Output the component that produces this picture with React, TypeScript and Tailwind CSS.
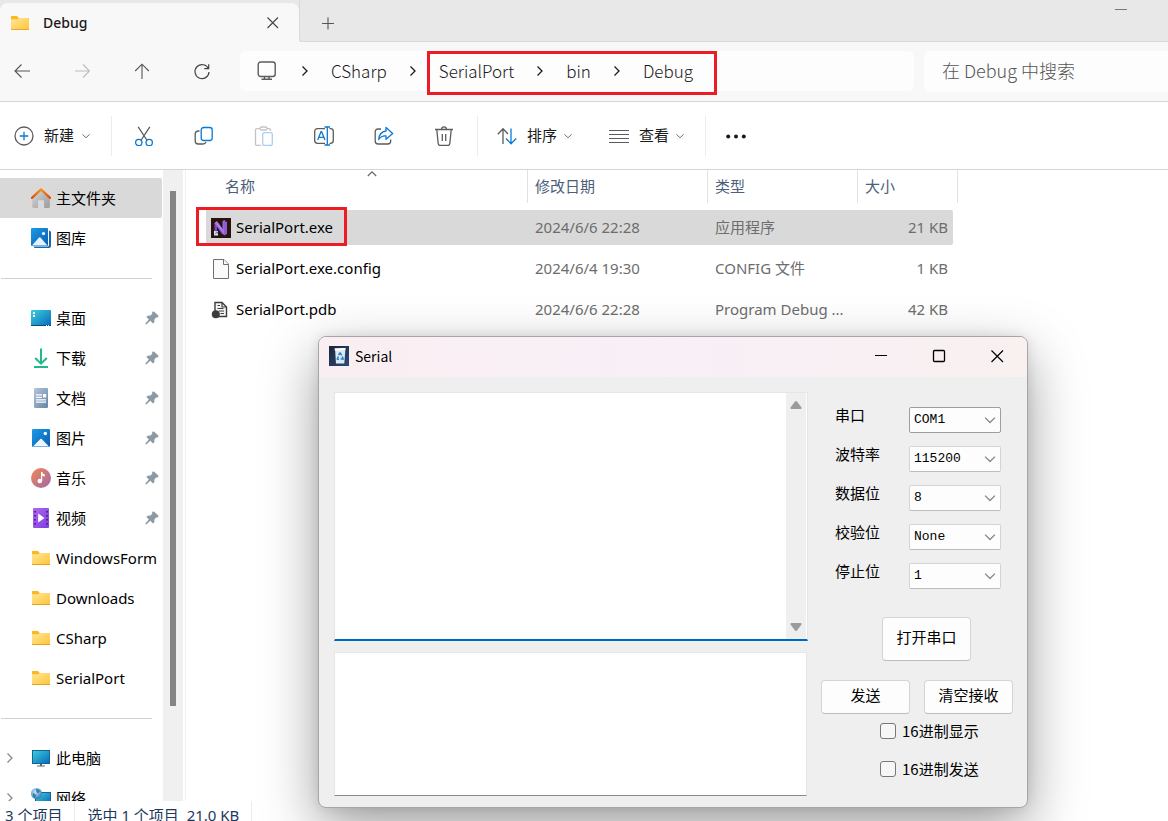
import type { ReactNode } from "react";

/* ---------- Icons ---------- */

function FolderIcon() {
  return (
    <svg viewBox="0 0 20 20" className="size-5 shrink-0" aria-hidden="true">
      <defs>
        <linearGradient id="folder" x1="0" y1="0" x2="1" y2="1">
          <stop offset="0" stopColor="#ffe69a" />
          <stop offset="1" stopColor="#ffc53a" />
        </linearGradient>
      </defs>
      <path d="M1 3.6Q1 3 1.6 3H7l1.8 2H18.400q.6 0 .6.600V10H1z" fill="#fcb81c" />
      <path d="M1 6.200H7L8.800 5H19V16.400H1z" fill="url(#folder)" />
      <path d="M1 16h18v.9H1z" fill="#e5a21c" />
    </svg>
  );
}

function HomeIcon() {
  return (
    <svg viewBox="0 0 20 20" className="size-5 shrink-0" aria-hidden="true">
      <defs>
        <linearGradient id="wall" x1="0" y1="0" x2="1" y2="1">
          <stop offset="0" stopColor="#d9d9d9" />
          <stop offset="1" stopColor="#9a9a9a" />
        </linearGradient>
        <linearGradient id="roof" x1="0" y1="0" x2="0" y2="1">
          <stop offset="0" stopColor="#f6921e" />
          <stop offset="1" stopColor="#dd4f12" />
        </linearGradient>
      </defs>
      <path d="M1.200 9.500 10 1.500l8.800 8V18.500q0 1.500-1.500 1.500H13V13.500q0-1.200-1.200-1.200H8.200Q7 12.300 7 13.500V20H2.700Q1.200 20 1.200 18.500z" fill="url(#wall)" />
      <path d="M.9 9.900 10 1.400l9.100 8.500" fill="none" stroke="url(#roof)" strokeWidth="2.300" strokeLinecap="round" strokeLinejoin="round" />
    </svg>
  );
}

function PictureIcon({ stacked = false }: { stacked?: boolean }) {
  return (
    <svg viewBox="0 0 20 20" className="size-5 shrink-0" aria-hidden="true">
      <defs>
        <linearGradient id="sky" x1="0" y1="0" x2="1" y2="1">
          <stop offset="0" stopColor="#1c9be8" />
          <stop offset="1" stopColor="#0a5cb0" />
        </linearGradient>
      </defs>
      {stacked ? (
        <>
          <path d="M18 2.500q2 .3 2 2V18q0 2-2 2H4.500q-1.700 0-2-1.500H16.500q1.500 0 1.500-1.500z" fill="#1566b5" />
          <rect x="0" y="0" width="17" height="18" rx="1" fill="url(#sky)" />
          <circle cx="12.500" cy="5.500" r="1.600" fill="#fff" />
          <path d="M1 17.500 8 9.500q.7-.7 1.400 0L16.500 17.500z" fill="#e6f3fd" />
        </>
      ) : (
        <>
          <rect x="1" y="1" width="18" height="18" rx="1.200" fill="url(#sky)" />
          <circle cx="14.300" cy="5.500" r="1.700" fill="#fff" />
          <path d="M2 18.500 9.300 11q.7-.7 1.400 0L18 18.500z" fill="#eef7fe" />
        </>
      )}
    </svg>
  );
}

function DesktopIcon() {
  return (
    <svg viewBox="0 0 20 20" className="size-5 shrink-0" aria-hidden="true">
      <defs>
        <linearGradient id="desk" x1="0" y1="0" x2="1" y2="1">
          <stop offset="0" stopColor="#38d0dd" />
          <stop offset="1" stopColor="#0b68bb" />
        </linearGradient>
      </defs>
      <rect x="0" y="2" width="20" height="16" rx="1" fill="url(#desk)" />
      <path d="M2 4h2v2H2zM2 7h2v2H2z" fill="#fff" />
      <path d="M0 17h20v1H0z" fill="#0c4a78" />
      <path d="M15 17h1v1h-1zM17 17h1v1h-1z" fill="#cfe8f5" />
    </svg>
  );
}

function DownloadIcon() {
  return (
    <svg viewBox="0 0 20 20" className="size-5 shrink-0" fill="none" strokeWidth="2" aria-hidden="true">
      <path d="M10 .5V15.500M4.200 10 10 15.600 15.800 10" stroke="#22b78c" />
      <path d="M3 19H17" stroke="#22b78c" />
    </svg>
  );
}

function DocumentIcon() {
  return (
    <svg viewBox="0 0 20 20" className="size-5 shrink-0" aria-hidden="true">
      <defs>
        <linearGradient id="doc" x1="0" y1="0" x2="1" y2="1">
          <stop offset="0" stopColor="#b3c6dc" />
          <stop offset="1" stopColor="#6684a6" />
        </linearGradient>
      </defs>
      <rect x="3" y="0" width="14" height="20" rx="1.200" fill="url(#doc)" />
      <path d="M5 6.200h6v1.200H5zM5 8.700h6v1.200H5zM5 11.200h10v1.200H5zM5 13.500h10v1.200H5zM12 6h3.200v3.500H12z" fill="#fff" />
    </svg>
  );
}

function MusicIcon() {
  return (
    <svg viewBox="0 0 20 20" className="size-5 shrink-0" aria-hidden="true">
      <defs>
        <linearGradient id="music" x1="0" y1="0" x2="1" y2="1">
          <stop offset="0" stopColor="#f18a54" />
          <stop offset="1" stopColor="#a465a8" />
        </linearGradient>
      </defs>
      <circle cx="10" cy="10" r="10" fill="url(#music)" />
      <circle cx="8.800" cy="13" r="2.300" fill="#fff" />
      <path d="M10 4h1.200q.4 2 2.600 2.600v2q-1.600-.2-2.600-1.100V13H10z" fill="#fff" />
    </svg>
  );
}

function VideoIcon() {
  return (
    <svg viewBox="0 0 20 20" className="size-5 shrink-0" aria-hidden="true">
      <defs>
        <linearGradient id="video" x1="0" y1="0" x2="1" y2="1">
          <stop offset="0" stopColor="#b067ee" />
          <stop offset="1" stopColor="#7b3fe0" />
        </linearGradient>
      </defs>
      <rect x="2" y="0" width="16" height="20" rx="1" fill="url(#video)" />
      <path
        d="M3.200 3h1.600v1.600H3.200zM3.200 7h1.600v1.600H3.200zM3.200 11h1.600v1.600H3.200zM3.200 15h1.600v1.600H3.200zM15.200 3h1.600v1.600h-1.600zM15.200 7h1.600v1.600h-1.600zM15.200 11h1.600v1.600h-1.600zM15.200 15h1.600v1.600h-1.600z"
        fill="#3c1a78"
      />
      <path d="M7.200 5.600 13.500 10l-6.300 4.400z" fill="#fff" />
    </svg>
  );
}

function ComputerIcon() {
  return (
    <svg viewBox="0 0 20 20" className="size-5 shrink-0" aria-hidden="true">
      <rect x="1.500" y="2.500" width="17" height="13" fill="url(#desk)" stroke="#16648f" />
      <path d="M9 16h2v1.500h3v1H6v-1h3z" fill="#5c6d78" />
    </svg>
  );
}

function NetworkIcon() {
  return (
    <svg viewBox="0 0 20 20" className="size-5 shrink-0" aria-hidden="true">
      <defs>
        <radialGradient id="globe" cx=".4" cy=".35" r=".7">
          <stop offset="0" stopColor="#c6e6f6" />
          <stop offset="1" stopColor="#2f77ab" />
        </radialGradient>
      </defs>
      <rect x="4.500" y="4.500" width="15" height="11" fill="url(#desk)" stroke="#16648f" />
      <circle cx="5.500" cy="5.500" r="5.500" fill="url(#globe)" />
      <path d="M5 1q3 0 4 2L7 5.500 5.500 4z" fill="#2d7cb4" />
      <path d="M2 5l3 2-1 3Q1.500 9 2 5z" fill="#2d7cb4" />
      <path d="M10 16h3v2h3v1H7v-1h3z" fill="#5c6d78" />
    </svg>
  );
}

function PinIcon() {
  return (
    <svg viewBox="0 0 14 14" className="size-3.5 shrink-0" aria-hidden="true">
      <path d="M7.400.8Q8.300 0 9.200.8L13.200 4.500q.7.700 0 1.400-.9.700-2.100.6L9.400 8.400q.4 2.200-.6 3.500-.6.500-1.300 0L5.300 9.800 1.600 13.300H.5V12.300L3.900 8.500 1.900 6.600q-.6-.7 0-1.400Q3.300 4.200 5.500 4.500L7.200 2.800Q6.900 1.500 7.400.8z" fill="#8e9aa3" />
    </svg>
  );
}

function Chevron({ className }: { className: string }) {
  return (
    <svg viewBox="0 0 12 12" className={className} fill="none" aria-hidden="true">
      <path d="M3.500 1.500 8 6l-4.500 4.500" stroke="currentColor" strokeWidth="1.300" />
    </svg>
  );
}

function DownChevron({ className }: { className: string }) {
  return (
    <svg viewBox="0 0 10 10" className={className} fill="none" aria-hidden="true">
      <path d="M1.500 3.300 5 6.800l3.500-3.500" stroke="currentColor" />
    </svg>
  );
}

function Line({ children }: { children: ReactNode }) {
  return (
    <svg viewBox="0 0 20 20" className="size-5 shrink-0" fill="none" stroke="#5c5c5c" strokeWidth="1.300" aria-hidden="true">
      {children}
    </svg>
  );
}

function VisualStudioIcon() {
  return (
    <svg viewBox="0 0 20 20" className="size-5 shrink-0" aria-hidden="true">
      <rect width="20" height="20" fill="#2b120f" />
      <path d="M11.500 3 14 2v15.500l-2.500-2z" fill="#9a6ede" />
      <path d="M3.500 5 6 3.200 13.500 13.500V17L11 16.200 6 9v4.500l-2.500 1z" fill="#7c4abf" />
      <path d="M3.500 5 6 3.200 13.500 13.500V17z" fill="#a87be8" />
      <path d="M12.500 2.500 16 4v12l-2.800 1.500z" fill="#8b5fd0" />
      <rect x="3" y="13" width="4" height="4.500" fill="#dce9f7" />
      <path d="M3.800 16.500 6 14.300M4.500 14h1.800v1.800" stroke="#2c6cb8" strokeWidth=".8" fill="none" />
    </svg>
  );
}

function BlankFileIcon() {
  return (
    <svg viewBox="0 0 20 20" className="size-5 shrink-0" fill="#fafafa" stroke="#707070" aria-hidden="true">
      <path d="M2.500.5H13L17.500 5V19.500H2.500z" />
      <path d="M12.500.5V5.500H17.500" />
    </svg>
  );
}

function DebugFileIcon() {
  return (
    <svg viewBox="0 0 20 20" className="size-5 shrink-0" aria-hidden="true">
      <path d="M4 2.500H11L15.500 7V16.500H4z" fill="#f5f5f5" stroke="#3c3c3c" strokeWidth="1.400" />
      <path d="M11 2.500V7h4.500M6.500 5.500H9M6.500 8.500h6M8 11h5M9.500 13.500H13" stroke="#3c3c3c" strokeWidth="1.200" fill="none" />
      <circle cx="4.800" cy="14.300" r="4" fill="#3c3c3c" />
    </svg>
  );
}

function RecycleAppIcon() {
  return (
    <svg viewBox="0 0 20 20" className="size-5 shrink-0" aria-hidden="true">
      <defs>
        <linearGradient id="night" x1="0" y1="0" x2="1" y2="1">
          <stop offset="0" stopColor="#1c2634" />
          <stop offset="1" stopColor="#2d4a80" />
        </linearGradient>
      </defs>
      <rect width="20" height="20" fill="url(#night)" />
      <path d="M6 2.500 16.500 2 15.300 17.500H7z" fill="#dfe8ef" />
      <path d="M5.500 2.500 16.500 2l-.3 2-10.400.5z" fill="#fff" />
      <path d="M9.500 9 11 7l1.800 2.200M13.300 10.500l.8 2.500h-2.500M10 13.500 8.300 13l1-2.500" stroke="#1583d8" strokeWidth="1.500" fill="none" />
    </svg>
  );
}

/* ---------- Explorer ---------- */

function NavBar() {
  return (
    <div className="flex shrink-0 items-start border-b border-[#d5d5d5] bg-[#f8f8f8] pt-[9px] pb-[9px] pl-3">
      <div className="flex h-10 shrink-0 items-center gap-10">
        <button aria-label="后退"><Line><path d="M18 10H3M9.500 3.500 3 10l6.500 6.500" stroke="#555" strokeWidth="1.100" /></Line></button>
        <button aria-label="前进"><Line><path d="M3 10H17.500M11 3.500 17.500 10 11 16.500" stroke="#bdbdbd" strokeWidth="1.100" /></Line></button>
        <button aria-label="向上"><Line><path d="M10 18V3.200M3.200 10 10 3.200l6.800 6.800" stroke="#555" strokeWidth="1.100" /></Line></button>
        <button aria-label="刷新"><Line><path d="M16.500 8A7 7 0 1 0 17 11M16.700 3.300V7.700H12.300" stroke="#444" strokeWidth="1.200" /></Line></button>
      </div>
      <nav aria-label="路径" className="ml-7 flex h-10 flex-1 items-center gap-5 rounded-md bg-[#fdfdfd] pl-[17px] font-['Noto_Sans_CJK_SC',sans-serif] text-[17px] leading-10 font-light text-[#1a1a1a]">
        <svg viewBox="0 0 20 20" className="mr-0.5 size-5 shrink-0" fill="none" stroke="#5c5c5c" strokeWidth="1.400" aria-hidden="true">
          <rect x="1.200" y="1" width="17" height="14.500" rx="2.500" />
          <path d="M7.500 15.500V18M12 15.500V18M4.500 18.300H15" />
        </svg>
        <Chevron className="size-3 shrink-0" />
        <a href="#csharp">CSharp</a>
        <Chevron className="size-3 shrink-0" />
        <div className="relative flex h-10 items-center gap-5">
          <a href="#serialport">SerialPort</a>
          <Chevron className="size-3 shrink-0" />
          <a href="#bin">bin</a>
          <Chevron className="size-3 shrink-0" />
          <a href="#debug">Debug</a>
          <span className="pointer-events-none absolute top-0 -right-6 -bottom-1 -left-3 border-3 border-[#ed1c24]" />
        </div>
      </nav>
      <input
        type="search"
        aria-label="搜索"
        placeholder="在 Debug 中搜索"
        className="ml-2.5 h-[41px] w-[244px] rounded-l-md bg-[#fdfdfd] pb-1 pl-[18px] font-['Noto_Sans_CJK_SC',sans-serif] text-[18px] font-light text-[#333] outline-none placeholder:text-[#555]"
      />
    </div>
  );
}

function Toolbar() {
  return (
    <div role="toolbar" className="flex h-[68px] shrink-0 items-center border-b border-[#d5d5d5] bg-white pl-[14px] text-[15px] text-[#1a1a1a]">
      <button className="flex items-center gap-2.5">
        <Line>
          <circle cx="10" cy="10" r="9" />
          <path d="M10 5.700v8.600M5.700 10h8.600" stroke="#0b78d4" />
        </Line>
        新建
        <DownChevron className="-ml-[3px] size-2.5 text-[#666]" />
      </button>
      <span className="mr-[22px] ml-5 h-10 w-px bg-[#ececec]" />
      <div className="flex gap-10">
        <button aria-label="剪切">
          <Line>
            <path d="M4.200.8 12.800 14M15.800.8 7.200 14" />
            <circle cx="4.800" cy="16.500" r="3.200" stroke="#0b78d4" />
            <circle cx="15.200" cy="16.500" r="3.200" stroke="#0b78d4" />
          </Line>
        </button>
        <button aria-label="复制">
          <Line>
            <path d="M5.500 5H4Q1.200 5.500 1.200 8v7q0 3 3 3H9q2.300 0 3-2" />
            <rect x="7.200" y="1.500" width="11" height="13" rx="2.500" stroke="#0b78d4" />
          </Line>
        </button>
        <button aria-label="粘贴" disabled>
          <Line>
            <path d="M6 2.700H3q-1.500 0-1.500 1.500V18q0 1.500 1.500 1.500H7M13 2.700h2q1.500 0 1.500 1.500V5" stroke="#c4c4c4" />
            <rect x="6" y="1" width="7" height="3" rx="1.500" stroke="#c4c4c4" />
            <rect x="8.700" y="6.700" width="9.600" height="12.800" rx="1.500" stroke="#a9d0f0" />
          </Line>
        </button>
        <button aria-label="重命名">
          <Line>
            <path d="M11 2.700H3.500Q.7 2.700.7 5.500v9q0 2.800 2.800 2.800H11M15.500 2.700h1q2.800 0 2.800 2.800v9q0 2.800-2.800 2.800h-1" />
            <path d="M3.700 14 7 5.700h.6L11 14M5 11.300h4.800M13.300 1.200v17.600M10.500 1h5.600M10.500 19h5.600" stroke="#0b78d4" />
          </Line>
        </button>
        <button aria-label="共享">
          <Line>
            <path d="M7 3H4.200Q1.200 3 1.200 6v9q0 3 3 3h9.500q3 0 3-3v-1.500" />
            <path d="M12 1.500 18.700 7.500 12 13.300V10Q7.500 9.500 4.700 13.500 5.300 6 12 5z" stroke="#0b78d4" strokeLinejoin="round" />
          </Line>
        </button>
        <button aria-label="删除">
          <Line>
            <path d="M1 3.500h18M7.500 3.300Q7.700.8 10 .8t2.500 2.500M2.800 3.700 4.200 17.500q.2 2 2 2h7.600q1.800 0 2-2L17.200 3.700M8.300 8v7M11.700 8v7" />
          </Line>
        </button>
      </div>
      <span className="mr-[19px] ml-[23px] h-10 w-px bg-[#ececec]" />
      <button className="flex items-center gap-2.5">
        <Line>
          <path d="M6 18V3M.8 8.200 6 2.800 11 8" />
          <path d="M14 2.500v15M9 12.500l5 5.200 5.200-5.200" stroke="#0b78d4" />
        </Line>
        排序
        <DownChevron className="-ml-1 size-2.5 text-[#666]" />
      </button>
      <button className="ml-9 flex items-center gap-2.5">
        <Line><path d="M0 4.500h20M0 8.500h20M0 12.500h20M0 16.500h20" strokeWidth="1.200" /></Line>
        查看
        <DownChevron className="-ml-1 size-2.5 text-[#666]" />
      </button>
      <span className="mx-5 h-10 w-px bg-[#ececec]" />
      <button aria-label="更多">
        <svg viewBox="0 0 20 20" className="size-5" fill="#1a1a1a" aria-hidden="true">
          <circle cx="2.200" cy="10.500" r="2" />
          <circle cx="10" cy="10.500" r="2" />
          <circle cx="17.800" cy="10.500" r="2" />
        </svg>
      </button>
    </div>
  );
}

type Place = { label: string; icon: ReactNode; pinned?: boolean; expandable?: boolean; active?: boolean };

const groups: Place[][] = [
  [
    { label: "主文件夹", icon: <HomeIcon />, active: true },
    { label: "图库", icon: <PictureIcon stacked /> },
  ],
  [
    { label: "桌面", icon: <DesktopIcon />, pinned: true },
    { label: "下载", icon: <DownloadIcon />, pinned: true },
    { label: "文档", icon: <DocumentIcon />, pinned: true },
    { label: "图片", icon: <PictureIcon />, pinned: true },
    { label: "音乐", icon: <MusicIcon />, pinned: true },
    { label: "视频", icon: <VideoIcon />, pinned: true },
    { label: "WindowsForm", icon: <FolderIcon /> },
    { label: "Downloads", icon: <FolderIcon /> },
    { label: "CSharp", icon: <FolderIcon /> },
    { label: "SerialPort", icon: <FolderIcon /> },
  ],
  [
    { label: "此电脑", icon: <ComputerIcon />, expandable: true },
    { label: "网络", icon: <NetworkIcon />, expandable: true },
  ],
];

function Sidebar() {
  return (
    <aside className="flex shrink-0 overflow-hidden border-r border-[#f0f0f0]">
      <div className="w-[163px] pt-2 pr-px">
        {groups.map((group, index) => (
          <div key={index}>
            {index > 0 && (
              <div className="flex h-10 items-center pr-2.5 pl-px">
                <hr className="flex-1 border-[#d2d2d2]" />
              </div>
            )}
            <ul>
              {group.map((place) => (
                <li key={place.label}>
                  <a
                    href="#place"
                    className={`flex h-10 items-center overflow-hidden rounded-r-xs pr-[3px] whitespace-nowrap ${place.active ? "bg-[#d9d9d9]" : ""}`}
                  >
                    <span className="flex w-[31px] shrink-0 pl-1 text-[#8a8a8a]">
                      {place.expandable && <Chevron className="size-3" />}
                    </span>
                    {place.icon}
                    <span className="ml-[5px] flex-1">{place.label}</span>
                    {place.pinned && <PinIcon />}
                  </a>
                </li>
              ))}
            </ul>
          </div>
        ))}
      </div>
      <div className="mr-0.5 w-5 bg-[#f0f0f0] pt-[21px] pb-[95px] pl-[7px]">
        <div className="h-full w-1.5 bg-[#858585]" />
      </div>
    </aside>
  );
}

const files = [
  { name: "SerialPort.exe", icon: <VisualStudioIcon />, date: "2024/6/6 22:28", type: "应用程序", size: "21 KB", selected: true },
  { name: "SerialPort.exe.config", icon: <BlankFileIcon />, date: "2024/6/4 19:30", type: "CONFIG 文件", size: "1 KB", selected: false },
  { name: "SerialPort.pdb", icon: <DebugFileIcon />, date: "2024/6/6 22:28", type: "Program Debug ...", size: "42 KB", selected: false },
];

function FileTable() {
  return (
    <main className="min-w-0 flex-1 overflow-hidden pl-5">
      <table className="w-[752px] table-fixed border-collapse whitespace-nowrap">
        <colgroup>
          <col className="w-[322px]" />
          <col className="w-[180px]" />
          <col className="w-[150px]" />
          <col className="w-[100px]" />
        </colgroup>
        <thead>
          <tr className="h-10 text-left text-[#4c607a] [&_div]:flex [&_div]:h-[33px] [&_div]:items-center [&_div]:border-r [&_div]:border-[#e2e2e2] [&_div]:pl-[7px] [&_th]:p-0 [&_th]:align-top [&_th]:font-normal">
            <th className="relative">
              <div><span className="ml-3">名称</span></div>
              <DownChevron className="absolute -top-0.5 left-40 size-3 rotate-180 text-[#666]" />
            </th>
            <th><div>修改日期</div></th>
            <th><div>类型</div></th>
            <th><div>大小</div></th>
          </tr>
        </thead>
        <tbody className="text-[#6d6d6d] [&_td]:p-0 [&_td]:align-top">
          {files.map((file) => {
            const cell = `flex h-[35px] items-center ${file.selected ? "bg-[#d9d9d9]" : ""}`;
            return (
              <tr key={file.name} className="h-[41px]">
                <td className="relative">
                  <div className={`${cell} gap-[5px] pl-[5px] text-black`}>
                    {file.icon}
                    {file.name}
                  </div>
                  {file.selected && (
                    <span className="pointer-events-none absolute -top-[3px] -left-2.5 h-[39px] w-[151px] border-3 border-[#ed1c24]" />
                  )}
                </td>
                <td><div className={`${cell} pl-[7px]`}>{file.date}</div></td>
                <td><div className={`${cell} pl-[7px]`}>{file.type}</div></td>
                <td><div className={`${cell} mr-[5px] justify-end rounded-r-xs pr-[5px]`}>{file.size}</div></td>
              </tr>
            );
          })}
        </tbody>
      </table>
    </main>
  );
}

/* ---------- Serial window ---------- */

const settings = [
  { id: "port", label: "串口", value: "COM1", focused: true },
  { id: "baud", label: "波特率", value: "115200", focused: false },
  { id: "data", label: "数据位", value: "8", focused: false },
  { id: "parity", label: "校验位", value: "None", focused: false },
  { id: "stop", label: "停止位", value: "1", focused: false },
];

const buttonStyle = "rounded border border-[#d4d4d4] border-b-[#bcbcbc] bg-[#fdfdfd] pb-1";

function SerialWindow() {
  return (
    <section
      aria-label="Serial"
      className="absolute top-[336px] left-[318px] w-[710px] overflow-hidden rounded-lg border border-[#a6a6a6] bg-[#efefef] text-[15px] shadow-[0_20px_56px_rgba(0,0,0,0.38),0_0_12px_rgba(0,0,0,0.1)]"
    >
      <header className="flex h-10 items-center bg-linear-to-r from-[#f9eff2] via-[#f8eff7] to-[#f9f0f0] pb-0.5 pl-2.5">
        <RecycleAppIcon />
        <h1 className="ml-1.5 flex-1 font-['Noto_Sans_CJK_SC',sans-serif] text-[14px] leading-5">Serial</h1>
        <div className="mr-5 flex gap-[38px]">
          <button aria-label="最小化"><Line><path d="M4 9.500h12" stroke="#000" strokeWidth="1" /></Line></button>
          <button aria-label="最大化"><Line><rect x="4.500" y="4.500" width="11" height="11" rx="1" stroke="#000" /></Line></button>
          <button aria-label="关闭"><Line><path d="m4.500 4.500 11.500 11.500M16 4.500 4.500 16" stroke="#000" strokeWidth="1.200" /></Line></button>
        </div>
      </header>
      <div className="flex gap-[13px] pt-[15px] pr-[14px] pb-[11px] pl-[15px]">
        <div className="flex flex-1 flex-col gap-[11px]">
          <div className="flex h-[249px] border border-b-2 border-[#e6e6e6] border-b-[#0067c0] bg-white">
            <textarea aria-label="接收" readOnly className="flex-1 resize-none outline-none" />
            <div className="mr-px flex w-5 flex-col items-center justify-between bg-[#efefef] py-[7px]">
              <svg viewBox="0 0 12 10" className="h-2.5 w-3" fill="#9b9b9b" aria-hidden="true">
                <path d="M5 1.500q1-1 2 0l4.500 6q.5 1.500-1 1.500h-9Q0 9 .5 7.500z" />
              </svg>
              <svg viewBox="0 0 12 10" className="h-2.5 w-3" fill="#9b9b9b" aria-hidden="true">
                <path d="M5 8.500q1 1 2 0l4.500-6q.5-1.500-1-1.500h-9Q0 1 .5 2.500z" />
              </svg>
            </div>
          </div>
          <textarea
            aria-label="发送内容"
            className="mr-px h-36 resize-none border border-[#e6e6e6] border-b-[#8a8a8a] bg-white outline-none"
          />
        </div>
        <form className="flex w-48 flex-col items-start pt-[15px] font-['Noto_Sans_CJK_SC',sans-serif]">
          <div className="flex w-full flex-col gap-[13px] pr-3 pl-[14px]">
            {settings.map((item) => (
              <div key={item.id} className="flex h-[26px] justify-between">
                <label htmlFor={item.id} className="leading-4">{item.label}</label>
                <div className="relative">
                  <select
                    id={item.id}
                    defaultValue={item.value}
                    className={`block h-[26px] w-[92px] appearance-none rounded-xs border bg-[#fdfdfd] pl-1 font-['Liberation_Mono',monospace] text-[13px] outline-none ${item.focused ? "border-[#9e9e9e]" : "border-[#d4d4d4] border-b-[#bcbcbc]"}`}
                  >
                    <option>{item.value}</option>
                  </select>
                  <DownChevron className="pointer-events-none absolute top-1.5 right-1 size-[14px] text-[#888]" />
                </div>
              </div>
            ))}
          </div>
          <button type="button" className={`${buttonStyle} mt-7 ml-[61px] h-11 w-[89px]`}>打开串口</button>
          <div className="mt-[19px] flex w-full justify-between">
            <button type="button" className={`${buttonStyle} h-[34px] w-[89px]`}>发送</button>
            <button type="button" className={`${buttonStyle} h-[34px] w-[89px]`}>清空接收</button>
          </div>
          <div className="mt-2 ml-[59px] flex flex-col gap-5">
            {["16进制显示", "16进制发送"].map((text) => (
              <label key={text} className="flex h-[18px] items-center gap-1.5 leading-4">
                <input type="checkbox" className="size-4 appearance-none rounded-[3px] border border-[#777] bg-[#f6f6f6] checked:bg-[#0067c0]" />
                {text}
              </label>
            ))}
          </div>
        </form>
      </div>
    </section>
  );
}

export default function App() {
  return (
    <div className="relative flex h-screen flex-col overflow-hidden bg-white font-['Noto_Sans','Noto_Sans_CJK_SC',sans-serif] text-[15px] text-black">
      <div className="flex h-[42px] shrink-0 bg-[#e8e8e8]">
        <div className="mt-[3px] flex w-[299px] items-center rounded-t-lg bg-[#f8f8f8] pr-4 pl-2.5">
          <FolderIcon />
          <span className="ml-[13px] flex-1 text-[14px] font-medium text-[#1a1a1a]">Debug</span>
          <button aria-label="关闭标签页"><Line><path d="m4.500 4.500 10.500 10.500M15 4.500 4.500 15" stroke="#444" strokeWidth="1.100" /></Line></button>
        </div>
        <div className="flex flex-1 justify-between rounded-bl-sm border-b border-l border-[#d9d9d9] pr-[37px] pl-[18px]">
          <button aria-label="新建标签页" className="pt-1"><Line><path d="M10 4.500v12M4 10.500h12" stroke="#555" strokeWidth="1.100" /></Line></button>
          <button aria-label="最小化窗口" className="h-5"><Line><path d="M4 9.500h12" stroke="#777" strokeWidth="1" /></Line></button>
        </div>
      </div>
      <NavBar />
      <Toolbar />
      <div className="flex min-h-0 flex-1">
        <Sidebar />
        <FileTable />
      </div>
      <footer className="flex h-5 shrink-0 overflow-hidden pl-[5px] leading-7 whitespace-pre text-[#1e395b]">
        <span className="border-r border-[#ececec] pr-3">3 个项目</span>
        <span className="border-r border-[#ececec] px-3">选中 1 个项目  21.0 KB</span>
      </footer>
      <SerialWindow />
    </div>
  );
}
